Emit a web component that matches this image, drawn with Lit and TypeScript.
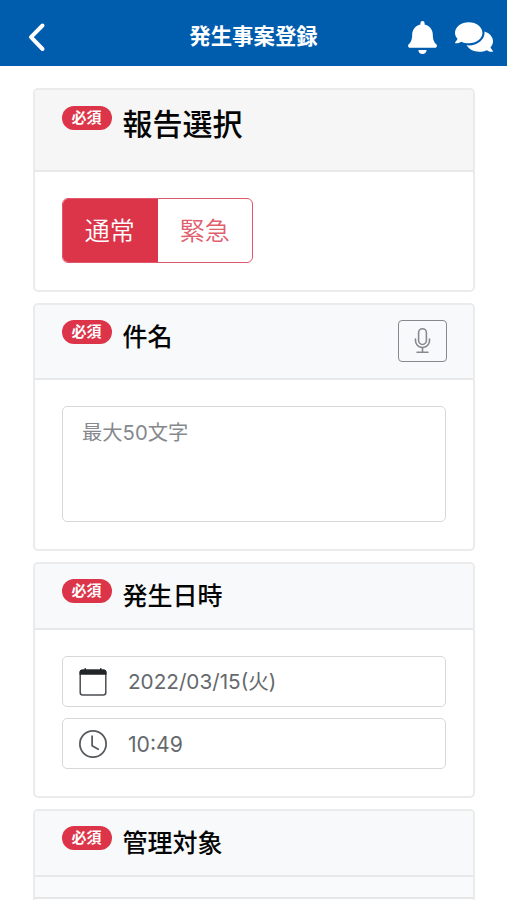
import { LitElement, html, css, svg } from "lit";
import { customElement, property } from "lit/decorators.js";

const backIcon = svg`<svg width="18" height="30" viewBox="0 0 18 30" fill="none" stroke="#fff" stroke-width="4" stroke-linecap="round" stroke-linejoin="round"><path d="M14.500 3.500 3 15.200 14.500 27"/></svg>`;

const bellIcon = svg`<svg width="29" height="33" viewBox="0 0 448 512" fill="#fff"><path d="M224 512c35.320 0 63.970-28.650 63.970-64H160.030c0 35.350 28.650 64 63.970 64zm215.390-149.710c-19.320-20.760-55.470-51.990-55.470-154.290 0-77.700-54.480-139.900-127.940-155.160V32c0-17.670-14.320-32-31.980-32s-31.980 14.330-31.980 32v20.840C118.560 68.100 64.080 130.300 64.080 208c0 102.300-36.150 133.530-55.470 154.290-6 6.450-8.660 14.160-8.610 21.710.11 16.400 12.980 32 32.100 32h383.800c19.120 0 32-15.600 32.100-32 .05-7.550-2.610-15.270-8.610-21.710z"/></svg>`;

const chatIcon = svg`<svg width="38" height="34" viewBox="0 0 576 512" fill="#fff"><path d="M416 192c0-88.400-93.100-160-208-160S0 103.600 0 192c0 34.300 14.100 65.900 38 92-13.400 30.200-35.500 54.200-35.800 54.500-2.200 2.300-2.800 5.700-1.500 8.700S4.800 352 8 352c36.600 0 66.900-12.300 88.700-25 32.200 15.700 70.300 25 111.300 25 114.900 0 208-71.600 208-160zm122 220c23.900-26 38-57.700 38-92 0-66.900-53.500-124.200-129.300-148.100.9 6.600 1.300 13.300 1.300 20.100 0 105.900-107.700 192-240 192-10.800 0-21.300-.8-31.700-1.900C207.800 439.600 281.800 480 368 480c41 0 79.100-9.200 111.300-25 21.800 12.700 52.100 25 88.700 25 3.200 0 6.100-1.900 7.300-4.800 1.300-2.900.7-6.300-1.500-8.700-.3-.3-22.400-24.200-35.800-54.500z"/></svg>`;

const micIcon = svg`<svg width="25" height="25" viewBox="0 0 16 16" fill="#85898d"><path d="M3.500 6.500A.5.500 0 0 1 4 7v1a4 4 0 0 0 8 0V7a.5.500 0 0 1 1 0v1a5 5 0 0 1-4.500 4.975V15h3a.5.500 0 0 1 0 1h-7a.5.500 0 0 1 0-1h3v-2.025A5 5 0 0 1 3 8V7a.5.500 0 0 1 .5-.5z"/><path d="M10 8a2 2 0 1 1-4 0V3a2 2 0 1 1 4 0v5zM8 0a3 3 0 0 0-3 3v5a3 3 0 0 0 6 0V3a3 3 0 0 0-3-3z"/></svg>`;

const calendarIcon = svg`<svg width="28" height="28" viewBox="0 0 28 28" fill="none"><rect x="1.200" y="2.200" width="25.600" height="24.800" rx="2.500" stroke="#4b4e51" stroke-width="1.500"/><path d="M.5 6.800V4.500a3 3 0 0 1 3-3H5.400V.9a.8.800 0 0 1 1.600 0v.6H21V.9a.8.800 0 0 1 1.600 0v.6h1.900a3 3 0 0 1 3 3v2.300z" fill="#222527"/></svg>`;

const clockIcon = svg`<svg width="28" height="28" viewBox="0 0 16 16" fill="#55595d"><path d="M8 3.500a.5.500 0 0 0-1 0V9a.5.500 0 0 0 .252.434l3.500 2a.5.500 0 0 0 .496-.868L8 8.710V3.500z"/><path d="M8 16A8 8 0 1 0 8 0a8 8 0 0 0 0 16zm7-8A7 7 0 1 1 1 8a7 7 0 0 1 14 0z"/></svg>`;

@customElement("form-card")
class FormCard extends LitElement {
  @property() heading = "";

  static styles = css`
    :host {
      display: flex;
      flex-direction: column;
      box-sizing: border-box;
      flex: none;
      border: 2px solid #ebebec;
      border-radius: 5px;
      overflow: hidden;
      background: #fff;
    }
    .head {
      display: flex;
      align-items: flex-start;
      box-sizing: border-box;
      height: var(--head-height, 67px);
      padding: 16px 26px 0 27px;
      background: var(--head-bg, #f8f9fb);
      border-bottom: 2px solid #e7e8ea;
    }
    .badge {
      flex: none;
      width: 50px;
      height: 24px;
      margin: var(--badge-shift, -1px) 11px 0 -0.500px;
      border-radius: 12px;
      background: #dc3448;
      color: #fff;
      font-size: 15px;
      font-weight: 700;
      line-height: 23px;
      text-align: center;
    }
    h2 {
      flex: 1;
      margin: var(--title-shift, 0) 0 0;
      color: #050505;
      font-size: var(--title-size, 25px);
      font-weight: 500;
      line-height: 32px;
    }
  `;

  render() {
    return html`
      <div class="head">
        <span class="badge">必須</span>
        <h2>${this.heading}</h2>
        <slot name="action"></slot>
      </div>
      <slot></slot>
    `;
  }
}

@customElement("app-root")
class AppRoot extends LitElement {
  static styles = css`
    :host {
      display: block;
      height: 900px;
      overflow: hidden;
      background: #fff;
      font-family: Inter, "Noto Sans CJK JP", sans-serif;
    }
    svg {
      display: block;
    }
    header {
      display: grid;
      grid-template-columns: 1fr auto 1fr;
      align-items: center;
      box-sizing: border-box;
      height: 66px;
      padding: 8px 14px 0;
      background: #005dae;
      color: #fff;
    }
    .back {
      padding-left: 14px;
    }
    h1 {
      margin: -2px 0 0;
      white-space: nowrap;
      font-size: 21.400px;
      font-weight: 700;
      line-height: 30px;
    }
    .actions {
      display: flex;
      align-items: center;
      justify-content: flex-end;
      gap: 18px;
    }
    main {
      display: flex;
      flex-direction: column;
      gap: 11px;
      padding: 22px 32px 0 33px;
    }
    .body {
      display: flex;
      flex-direction: column;
      gap: 11px;
      padding: 26px 27px 0 27px;
    }
    .report {
      height: 204px;
      --head-height: 82px;
      --head-bg: #f6f6f6;
      --title-size: 30px;
      --title-shift: 1.500px;
      --badge-shift: -0.500px;
    }
    .subject {
      height: 248px;
      --head-height: 75px;
    }
    .datetime {
      height: 236px;
      --head-height: 66px;
    }
    .target {
      height: 120px;
      --head-height: 66px;
    }
    .segments {
      display: flex;
      box-sizing: border-box;
      width: 191px;
      height: 65px;
      border: 1px solid #e0596a;
      border-radius: 6px;
      overflow: hidden;
      font-size: 25px;
      line-height: 64px;
      text-align: center;
    }
    .segment {
      flex: 1;
      color: #e0606d;
      font-weight: 350;
    }
    .segment.on {
      background: #dc3448;
      color: #fff;
      font-weight: 350;
      text-indent: -1px;
    }
    .mic {
      display: flex;
      align-items: center;
      justify-content: center;
      box-sizing: border-box;
      width: 49px;
      height: 42px;
      margin: -1px 0 0;
      padding: 0 0 2px;
      border: 1px solid #85898d;
      border-radius: 4px;
      background: transparent;
    }
    .field {
      display: flex;
      box-sizing: border-box;
      height: 51px;
      padding: 0 15.500px;
      align-items: center;
      gap: 21.500px;
      border: 1px solid #d5d8db;
      border-radius: 5px;
      color: #65696d;
      font-size: 20.700px;
      line-height: 30px;
    }
    .field.area {
      height: 116px;
      padding: 11px 19px;
      align-items: flex-start;
      color: #85898d;
      font-size: 20.300px;
    }
    .time {
      font-size: 21.200px;
    }
    .strip {
      height: 20px;
      background: #f9fafc;
      border-bottom: 2px solid #e4e6e7;
    }
  `;

  render() {
    return html`
      <header>
        <div class="back">${backIcon}</div>
        <h1>発生事案登録</h1>
        <div class="actions">${bellIcon}${chatIcon}</div>
      </header>
      <main>
        <form-card class="report" heading="報告選択">
          <div class="body">
            <div class="segments">
              <span class="segment on">通常</span>
              <span class="segment">緊急</span>
            </div>
          </div>
        </form-card>
        <form-card class="subject" heading="件名">
          <button class="mic" slot="action" aria-label="音声入力">${micIcon}</button>
          <div class="body">
            <div class="field area">最大50文字</div>
          </div>
        </form-card>
        <form-card class="datetime" heading="発生日時">
          <div class="body">
            <div class="field">${calendarIcon}<span>2022/03/15(火)</span></div>
            <div class="field">${clockIcon}<span class="time">10:49</span></div>
          </div>
        </form-card>
        <form-card class="target" heading="管理対象">
          <div class="strip"></div>
        </form-card>
      </main>
    `;
  }
}
